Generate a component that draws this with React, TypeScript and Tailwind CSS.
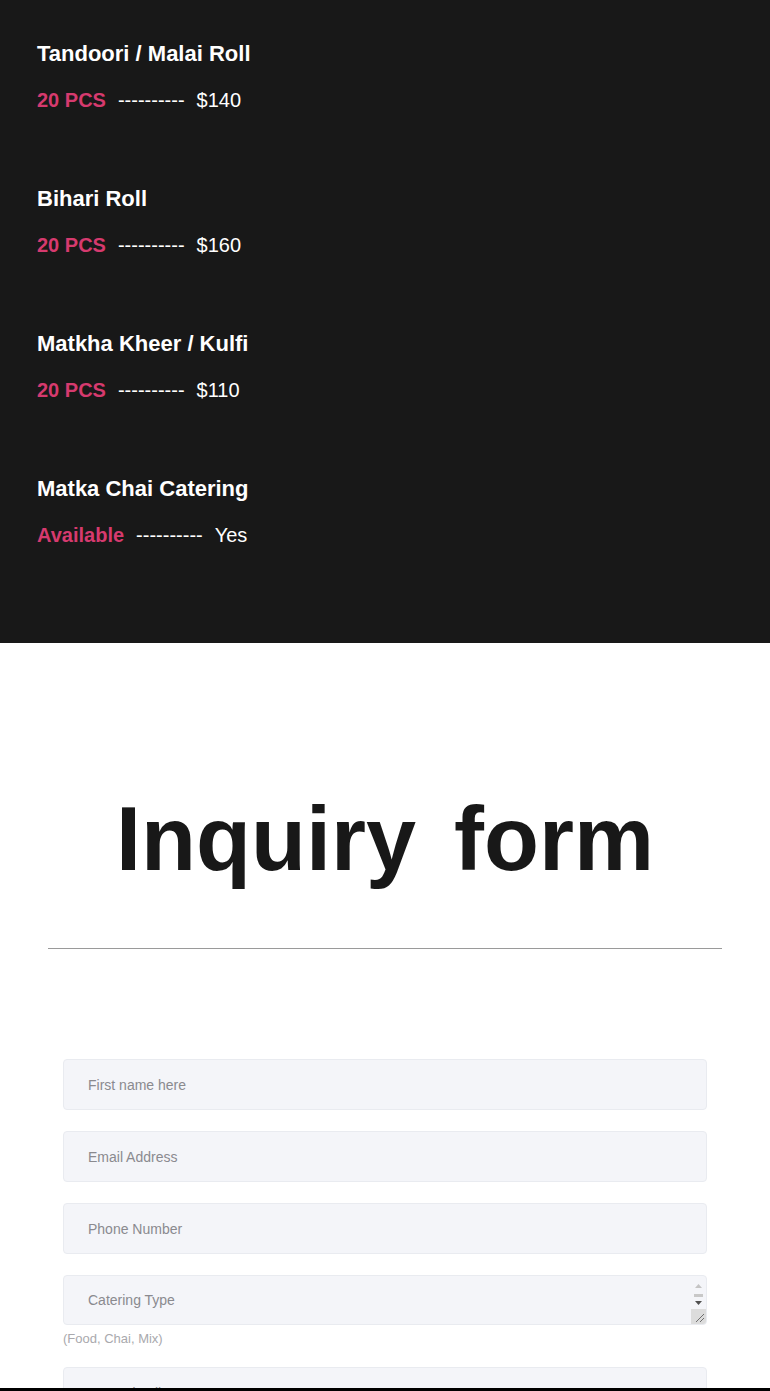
import React from "react";

const items = [
  { title: "Tandoori / Malai Roll", label: "20 PCS", value: "$140" },
  { title: "Bihari Roll", label: "20 PCS", value: "$160" },
  { title: "Matkha Kheer / Kulfi", label: "20 PCS", value: "$110" },
  { title: "Matka Chai Catering", label: "Available", value: "Yes" },
];

const inputCls =
  "block w-full h-[51px] rounded-[4px] border border-[#e9ebf0] bg-[#f4f5f9] px-[24px] text-[14px] text-[#333] placeholder:text-[#8a8a8f] outline-none font-['Liberation_Sans',Arial,sans-serif]";

export default function App() {
  return (
    <div className="min-h-[1391px] bg-white font-['Liberation_Sans',Arial,sans-serif]">
      <section className="bg-[#181818] pl-[37px] pt-[41px] pb-[96px]">
        <div className="flex flex-col gap-[74px]">
          {items.map((it) => (
            <div key={it.title}>
              <h3 className="text-[22px] leading-[26px] font-bold text-white">{it.title}</h3>
              <div className="mt-[21px] flex items-center gap-[12px] text-[20px] leading-[24px]">
                <span className="font-bold text-[#d63a6e]">{it.label}</span>
                <span className="text-white">----------</span>
                <span className="text-white">{it.value}</span>
              </div>
            </div>
          ))}
        </div>
      </section>

      <section className="pt-[151px]">
        <h1 className="text-center text-[90px] leading-[90px] font-bold text-[#181818] [word-spacing:13px]">
          Inquiry form
        </h1>
        <div className="mx-[48px] mt-[64px] h-px bg-[#9a9a9a]" />

        <form className="mx-[63px] mt-[110px] pb-[60px]">
          <input className={inputCls} placeholder="First name here" />
          <input className={inputCls + " mt-[21px]"} placeholder="Email Address" />
          <input className={inputCls + " mt-[21px]"} placeholder="Phone Number" />
          <div className="relative mt-[21px]">
            <textarea
              className="block w-full h-[50px] resize-none rounded-[4px] border border-[#e9ebf0] bg-[#f4f5f9] pl-[24px] pr-[20px] py-[15px] text-[14px] leading-[18px] text-[#333] placeholder:text-[#8a8a8f] outline-none overflow-hidden font-['Liberation_Sans',Arial,sans-serif]"
              placeholder="Catering Type"
            />
            <div className="pointer-events-none absolute right-[1px] top-[1px] bottom-[1px] w-[15px] flex flex-col items-center">
              <svg width="15" height="33" viewBox="0 0 15 33" className="block">
                <polygon points="4,12 11,12 7.5,8" fill="#c4c4c4" />
                <rect x="3" y="18" width="9" height="3" fill="#c8c8c8" />
                <polygon points="4,25 11,25 7.5,29" fill="#505050" />
              </svg>
              <div className="mt-auto w-[15px] h-[15px] bg-[#dcdcdc] rounded-br-[3px]">
                <svg width="15" height="15" viewBox="0 0 15 15" className="block">
                  <line x1="13" y1="5" x2="5" y2="13" stroke="#6f6f6f" strokeWidth="1" />
                  <line x1="13" y1="9" x2="9" y2="13" stroke="#6f6f6f" strokeWidth="1" />
                </svg>
              </div>
            </div>
          </div>
          <p className="mt-[6px] text-[13px] leading-[15px] text-[#a9a9ad]">(Food, Chai, Mix)</p>
          <input className={inputCls + " mt-[21px]"} placeholder="Event details" />
          <input className={inputCls + " mt-[21px]"} placeholder="Event Date" />
        </form>
      </section>

      <div className="fixed bottom-0 left-0 right-0 h-[3px] bg-black" />
    </div>
  );
}
